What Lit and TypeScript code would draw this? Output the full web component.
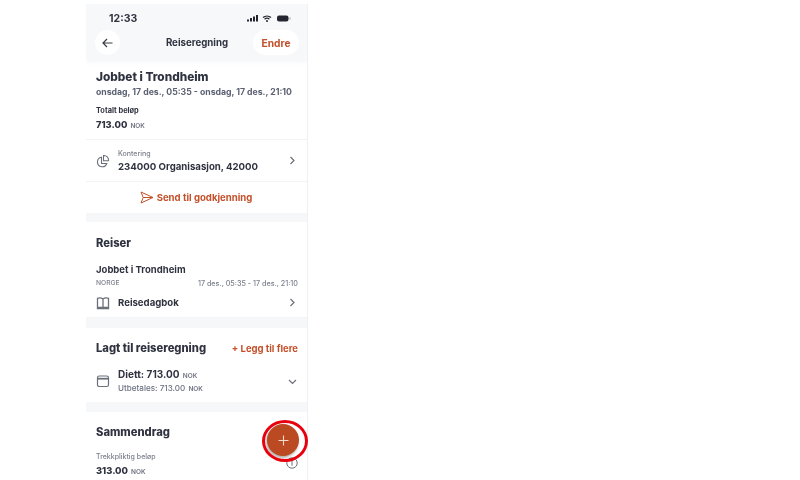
import { LitElement, html, css, svg } from "lit";
import { customElement } from "lit/decorators.js";

const chevron = svg`<path d="M3.500 2 7 5.500 3.500 9" fill="none" stroke="#6b7079" stroke-width="1.200"/>`;

@customElement("app-root")
export class AppRoot extends LitElement {
  static styles = css`
    :host { display: block; width: 800px; height: 480px; overflow: hidden; background: #fff;
      font-family: Inter, "Liberation Sans", sans-serif; color: #2f3340; }
    .phone { width: 221px; height: 476px; margin: 4px 0 0 86px; border-right: 1px solid #eef0f3; overflow: hidden; position: relative; filter: blur(0.5px); }
    .top { background: #f7f8f9; height: 56px; box-sizing: border-box; padding: 7px 8px 0 9px; box-shadow: 0 2px 4px rgba(240,241,244,.7); position: relative; }
    .status { display: flex; justify-content: space-between; align-items: center; height: 14px; padding: 0 8px 0 14px; font-size: 10.5px; font-weight: 700; }
    .status svg { display: block; }
    .nav { display: flex; align-items: center; justify-content: space-between; margin-top: 5px; }
    .back { width: 25px; height: 25px; border-radius: 50%; background: #fff; display: grid; place-items: center; }
    .navtitle { font-size: 9.700px; font-weight: 700; margin-left: 21px; }
    .edit { width: 46px; height: 25px; border-radius: 13px; background: #fff; display: grid; place-items: center; font-size: 10.200px; font-weight: 700; color: #c4512b; }
    .block { padding: 0 9px 0 10px; }
    .h1 { font-size: 11.800px; font-weight: 800; line-height: 16px; padding-top: 9px; }
    .dates { font-size: 8.700px; font-weight: 700; color: #5b6172; line-height: 11px; margin-top: 2px; }
    .lbl { font-size: 7.400px; font-weight: 700; line-height: 9px; margin-top: 8px; }
    .amount { font-size: 9.300px; font-weight: 800; line-height: 12px; margin-top: 4px; }
    .nok { font-size: 6.500px; font-weight: 600; color: #6c7180; margin-left: 1px; }
    .row { display: flex; align-items: center; padding: 0 9px 0 10px; }
    .ic { width: 14px; height: 14px; margin-right: 8px; flex: none; display: block; }
    .grow { flex: 1; min-width: 0; }
    .kont { height: 41px; margin-top: 7px; border-top: 1px solid #f2f3f5; border-bottom: 1px solid #f2f3f5; }
    .sub { font-size: 7px; color: #7a7f8a; font-weight: 500; line-height: 9px; }
    .sub.spaced { margin-top: 13px; }
    .strong { font-size: 9.650px; font-weight: 700; line-height: 12px; margin-top: 3px; }
    .send { height: 31px; display: flex; align-items: center; justify-content: center; gap: 3px; color: #c4512b; font-size: 9.600px; font-weight: 700; padding-right: 1px; }
    .gap { height: 10px; background: #f6f7f9; }
    .gap.first { height: 9px; }
    .h2 { font-size: 11.200px; font-weight: 800; line-height: 14px; }
    .reiser { padding-top: 14px; }
    .trip { font-size: 9.500px; font-weight: 700; line-height: 12px; margin-top: 14px; }
    .meta { display: flex; justify-content: space-between; font-size: 6.700px; color: #7a7f8a; font-weight: 500; line-height: 9px; margin-top: 3px; }
    .meta span + span { font-size: 7.200px; }
    .book { height: 29px; font-size: 9.600px; font-weight: 700; border-bottom: 1px solid #f4f5f7; }
    .between { display: flex; justify-content: space-between; align-items: center; padding-top: 13px; }
    .more { font-size: 9.500px; font-weight: 700; color: #c4512b; }
    .diett { height: 47px; box-sizing: border-box; padding-top: 5px; }
    .diett .strong { margin: 0; font-size: 10px; }
    .utb { font-size: 8.100px; color: #6c7180; font-weight: 500; line-height: 12px; margin-top: 0; }
    .sum { padding-top: 13px; }
    .fab { position: absolute; left: 181px; top: 420px; width: 32px; height: 32px; border-radius: 50%; background: #bb4a22; box-shadow: -1px 2px 3px rgba(60,40,30,.4); display: grid; place-items: center; }
    .ring { position: absolute; left: 262px; top: 420px; width: 46px; height: 42px; box-sizing: border-box; border: 3px solid #e8000f; border-radius: 50%; }
    .info { position: absolute; left: 200px; top: 453px; width: 12px; height: 12px; }
  `;

  render() {
    return html`<div class="phone">
        <div class="top">
          <div class="status"><span>12:33</span>
            <svg width="44" height="9" viewBox="0 0 44 9">
              <path d="M0 5.500h2v2H0zM3 4h2v3.500H3zM6 2.500h2v5H6zM9 1h2v6.500H9z" fill="#23262e"/>
              <path d="M16 3.600a6 6 0 0 1 8 0M17.600 5.200a3.600 3.600 0 0 1 4.800 0" fill="none" stroke="#23262e" stroke-width="1.300"/>
              <circle cx="20" cy="7" r="1" fill="#23262e"/>
              <rect x="30" y="1.500" width="11.500" height="6" rx="2" fill="#23262e"/>
              <rect x="42.500" y="3.500" width="1" height="2" fill="#9a9da3"/>
            </svg>
          </div>
          <div class="nav">
            <div class="back"><svg width="11" height="10" viewBox="0 0 11 10"><path d="M10.500 5H1M5 1 1 5l4 4" fill="none" stroke="#3a3d46" stroke-width="1.200"/></svg></div>
            <div class="navtitle">Reiseregning</div>
            <div class="edit">Endre</div>
          </div>
        </div>

        <div class="block">
          <div class="h1">Jobbet i Trondheim</div>
          <div class="dates">onsdag, 17 des., 05:35 - onsdag, 17 des., 21:10</div>
          <div class="lbl">Totalt beløp</div>
          <div class="amount">713.00 <span class="nok">NOK</span></div>
        </div>
        <div class="kont row">
          <svg class="ic" viewBox="0 0 14 14"><path d="M5.500 3.200a4.800 4.800 0 1 0 5.300 6.300H5.500z" fill="none" stroke="#6b7079" stroke-width="1.100"/><path d="M7.500 1.500a4.600 4.600 0 0 1 5 5.200h-5z" fill="none" stroke="#6b7079" stroke-width="1.100"/></svg>
          <div class="grow"><div class="sub">Kontering</div><div class="strong">234000 Organisasjon, 42000</div></div>
          <svg width="11" height="11" viewBox="0 0 11 11">${chevron}</svg>
        </div>
        <div class="send">
          <svg width="14" height="13" viewBox="0 0 14 13"><path d="M1 1 13 6.500 1 12 3.200 6.500zM3.200 6.500H13" fill="none" stroke="#c4512b" stroke-width="1"/></svg>
          Send til godkjenning
        </div>
        <div class="gap first"></div>

        <div class="block reiser">
          <div class="h2">Reiser</div>
          <div class="trip">Jobbet i Trondheim</div>
          <div class="meta"><span>NORGE</span><span>17 des., 05:35 - 17 des., 21:10</span></div>
        </div>
        <div class="row book">
          <svg class="ic" viewBox="0 0 14 14"><path d="M7 3C5.500 1.800 3 1.800 1.500 2.300v9.200H7zM7 3c1.500-1.200 4-1.200 5.500-.7v9.200H7zM.8 12.500h12.400" fill="none" stroke="#6b7079" stroke-width="1.300"/></svg>
          <div class="grow">Reisedagbok</div>
          <svg width="11" height="11" viewBox="0 0 11 11">${chevron}</svg>
        </div>
        <div class="gap"></div>

        <div class="block between"><div class="h2">Lagt til reiseregning</div><div class="more">+ Legg til flere</div></div>
        <div class="row diett">
          <svg class="ic" viewBox="0 0 14 14"><rect x="1.500" y="2" width="11" height="10.500" rx="1.800" fill="none" stroke="#6b7079" stroke-width="1.200"/><path d="M1.500 4.700h11" stroke="#6b7079" stroke-width="1.800"/></svg>
          <div class="grow"><div class="strong">Diett: 713.00 <span class="nok">NOK</span></div><div class="utb">Utbetales: 713.00 <span class="nok">NOK</span></div></div>
          <svg width="11" height="11" viewBox="0 0 11 11"><path d="M2 4 5.500 7.500 9 4" fill="none" stroke="#6b7079" stroke-width="1.200"/></svg>
        </div>
        <div class="gap"></div>

        <div class="block sum">
          <div class="h2">Sammendrag</div>
          <div class="sub spaced">Trekkpliktig beløp</div>
          <div class="amount">313.00 <span class="nok">NOK</span></div>
        </div>

        <svg class="info" viewBox="0 0 12 12"><circle cx="6" cy="6" r="5.200" fill="none" stroke="#6b7079"/><path d="M6 3.200v5.600" stroke="#6b7079"/></svg>
        <div class="fab"><svg width="11" height="11" viewBox="0 0 11 11"><path d="M5.500 .5v10M.5 5.500h10" stroke="#f4d9cd" stroke-width="1.100"/></svg></div>
      </div>
      <div class="ring"></div>`;
  }
}
